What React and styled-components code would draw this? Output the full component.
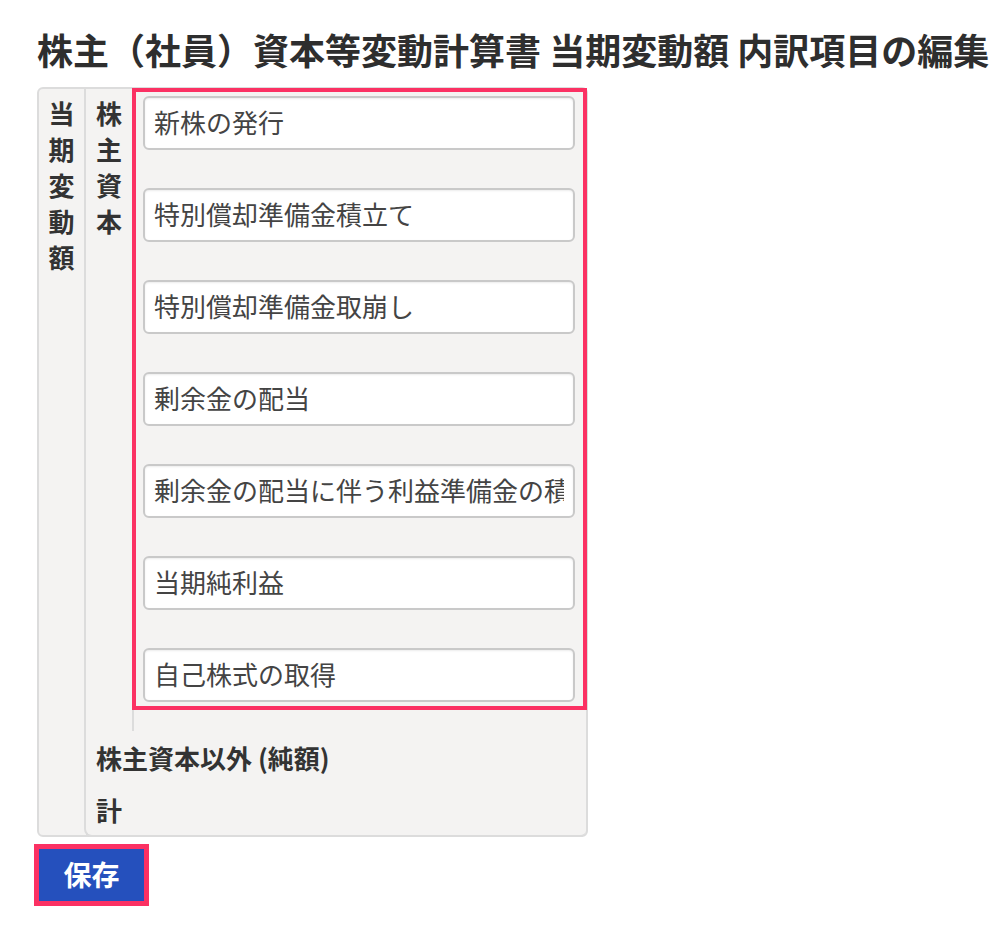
import React from "react";
import styled, { createGlobalStyle } from "styled-components";

const Global = createGlobalStyle`
  html, body { margin: 0; padding: 0; background: #fff; }
  body { font-family: "Noto Sans CJK JP", "Noto Sans", sans-serif; color: #333; }
  * { box-sizing: border-box; }
`;

const Page = styled.div`
  padding: 28px 0 20px 37px;
`;

const Title = styled.h1`
  margin: 0 0 16px;
  font-size: 36px;
  line-height: 43px;
  font-weight: 700;
  color: #2e2e2e;
  white-space: nowrap;
`;

const Tree = styled.div`
  display: flex;
  width: 551px;
  background: #f4f3f2;
  border: 2px solid #dcdcdc;
  border-radius: 6px;
`;

const VHead = styled.div`
  flex: 0 0 ${(p) => p.$w}px;
  padding-top: 6px;
  display: flex;
  justify-content: center;
`;

const VText = styled.span`
  width: 26px;
  font-size: 26px;
  line-height: 36px;
  font-weight: 700;
  color: #333;
  word-break: break-all;
  text-align: center;
`;

const Branch = styled.div`
  flex: 1;
  display: flex;
  flex-direction: column;
  border-left: 2px solid #dcdcdc;
  border-bottom: 2px solid #dcdcdc;
  border-bottom-left-radius: 8px;
  border-bottom-right-radius: 6px;
  margin-bottom: -2px;
`;

const BranchRow = styled.div`
  display: flex;
`;

const Leaf = styled.div`
  flex: 1;
  border-left: 2px solid #dcdcdc;
  padding: 3px 3px 25px 2px;
`;

const List = styled.div`
  display: flex;
  flex-direction: column;
  gap: 38px;
  padding: 4px 8px 4px 7px;
  outline: 4px solid #fb3163;
`;

const Field = styled.input`
  display: block;
  width: 100%;
  height: 54px;
  padding: 0 9px 4px;
  border: 2px solid #c9c9c9;
  border-radius: 6px;
  background: #fff;
  box-shadow: inset 0 1px 2px rgba(0, 0, 0, 0.08);
  font-family: "Noto Sans CJK JP", "Noto Sans", sans-serif;
  font-size: 26px;
  color: #444;
  outline: none;
`;

const LabelRow = styled.div`
  height: 52px;
  display: flex;
  align-items: center;
  padding-left: 10px;
  font-size: 26px;
  font-weight: 700;
  color: #333;
`;

const SaveButton = styled.button`
  display: block;
  margin: 12px 0 0 2px;
  width: 105px;
  height: 52px;
  padding: 0 0 3px;
  border: none;
  border-radius: 0;
  background: #2550bd;
  color: #fff;
  font-family: "Noto Sans CJK JP", "Noto Sans", sans-serif;
  font-size: 28px;
  font-weight: 700;
  outline: 5px solid #fb3163;
  cursor: pointer;
`;

const items = [
  "新株の発行",
  "特別償却準備金積立て",
  "特別償却準備金取崩し",
  "剰余金の配当",
  "剰余金の配当に伴う利益準備金の積立て",
  "当期純利益",
  "自己株式の取得",
];

export default function App() {
  return (
    <>
      <Global />
      <Page>
        <Title>株主（社員）資本等変動計算書 当期変動額 内訳項目の編集</Title>
        <Tree>
          <VHead $w={45}>
            <VText>当期変動額</VText>
          </VHead>
          <Branch>
            <BranchRow>
              <VHead $w={46}>
                <VText>株主資本</VText>
              </VHead>
              <Leaf>
                <List>
                  {items.map((t) => (
                    <Field key={t} type="text" defaultValue={t} />
                  ))}
                </List>
              </Leaf>
            </BranchRow>
            <LabelRow>株主資本以外 (純額)</LabelRow>
            <LabelRow>計</LabelRow>
          </Branch>
        </Tree>
        <SaveButton type="button">保存</SaveButton>
      </Page>
    </>
  );
}
